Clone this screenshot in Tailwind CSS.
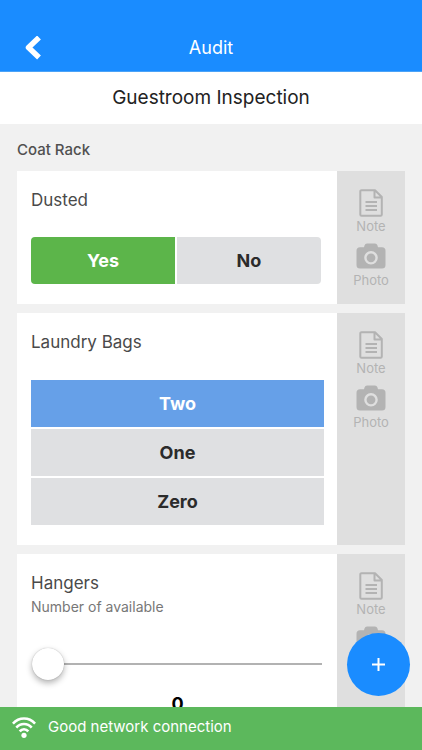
<!DOCTYPE html>
<html lang="en">
<head>
<meta charset="utf-8">
<meta name="viewport" content="width=device-width, initial-scale=1">
<title>Audit</title>
<script src="https://cdn.jsdelivr.net/npm/@tailwindcss/browser@4"></script>
</head>
<body class="relative flex h-dvh flex-col overflow-hidden bg-[#f1f1f1] font-['Inter',sans-serif] text-[#4a4a4a]">
<svg class="hidden" aria-hidden="true">
  <symbol id="note" viewBox="0 0 24 28">
    <path d="M2.500 1.200H16L22.800 8V25.500a1.200 1.200 0 0 1-1.200 1.200H2.500a1.200 1.200 0 0 1-1.200-1.200V2.400A1.200 1.200 0 0 1 2.500 1.200ZM15.500 1.500V8.500H22.500" fill="none" stroke="currentColor" stroke-width="2" stroke-linejoin="round"/>
    <path d="M6.500 13H18M6.500 17H18M6.500 21H18" fill="none" stroke="currentColor" stroke-width="1.900"/>
  </symbol>
  <symbol id="camera" viewBox="0 0 30 26">
    <path fill="currentColor" fill-rule="evenodd" d="M11 .5h8a2.500 2.500 0 0 1 2.400 1.800l.6 2H26a3.500 3.500 0 0 1 3.500 3.500V22a3.500 3.500 0 0 1-3.500 3.500H4A3.500 3.500 0 0 1 .5 22V7.800A3.500 3.500 0 0 1 4 4.300h4l.6-2A2.500 2.500 0 0 1 11 .5ZM15 8a6.800 6.800 0 1 0 0 13.600A6.800 6.800 0 0 0 15 8Zm0 2.400a4.400 4.400 0 1 1 0 8.800a4.400 4.400 0 0 1 0-8.800Z"/>
  </symbol>
</svg>

<header class="grid shrink-0 grid-cols-[1fr_auto_1fr] items-center border-b border-[#4ba3f7] bg-[#1a8cff] pt-6 text-white">
  <button type="button" aria-label="Back" class="ml-6 flex h-[47px] w-6 items-center">
    <svg class="h-6 w-[18px]" viewBox="0 0 18 24" fill="none" stroke="currentColor" stroke-width="5.500" stroke-linejoin="round" aria-hidden="true"><path d="M15 1.500 4.500 11.500 15 21.500"/></svg>
  </button>
  <h1 class="text-lg">Audit</h1>
</header>

<main class="min-h-0 flex-1 overflow-hidden">
  <h2 class="bg-white py-3 text-center text-[19px] leading-7 text-[#222]">Guestroom Inspection</h2>
  <section class="px-[17px] pt-3.5">
    <h3 class="text-[15px] leading-6 font-medium text-[#505050]">Coat Rack</h3>

    <div class="mt-[9px] flex flex-col gap-[9px]">
      <article class="flex bg-white">
        <div class="flex-1 pt-[17px] pr-[13px] pb-5 pl-3.5">
          <h4 class="text-[17px] leading-6">Dusted</h4>
          <div class="mt-[25px] mr-[3px] grid grid-cols-2 gap-0.5 text-lg font-bold" role="group" aria-label="Dusted">
            <button type="button" aria-pressed="true" class="h-[47px] rounded-l bg-[#5cb54a] text-white">Yes</button>
            <button type="button" aria-pressed="false" class="h-[47px] rounded-r bg-[#dfe0e2] text-[#2b2b2b]">No</button>
          </div>
        </div>
        <aside class="flex w-[68px] shrink-0 flex-col items-center gap-2 bg-[#dfdfdf] pt-[18px] text-[13px] leading-[18px] text-[#b3b3b3]">
          <button type="button" class="flex flex-col items-center"><svg class="h-7 w-6" aria-hidden="true"><use href="#note"/></svg>Note</button>
          <button type="button" class="flex flex-col items-center gap-0.5"><svg class="h-[26px] w-[30px]" aria-hidden="true"><use href="#camera"/></svg>Photo</button>
        </aside>
      </article>

      <article class="flex bg-white">
        <div class="flex-1 pt-[17px] pr-[13px] pb-5 pl-3.5">
          <h4 class="text-[17px] leading-6">Laundry Bags</h4>
          <div class="mt-[26px] flex flex-col gap-0.5 text-lg font-bold" role="group" aria-label="Laundry Bags">
            <button type="button" aria-pressed="true" class="h-[47px] bg-[#66a0e8] text-white">Two</button>
            <button type="button" aria-pressed="false" class="h-[47px] bg-[#dfe0e2] text-[#2b2b2b]">One</button>
            <button type="button" aria-pressed="false" class="h-[47px] bg-[#dfe0e2] text-[#2b2b2b]">Zero</button>
          </div>
        </div>
        <aside class="flex w-[68px] shrink-0 flex-col items-center gap-2 bg-[#dfdfdf] pt-[18px] text-[13px] leading-[18px] text-[#b3b3b3]">
          <button type="button" class="flex flex-col items-center"><svg class="h-7 w-6" aria-hidden="true"><use href="#note"/></svg>Note</button>
          <button type="button" class="flex flex-col items-center gap-0.5"><svg class="h-[26px] w-[30px]" aria-hidden="true"><use href="#camera"/></svg>Photo</button>
        </aside>
      </article>

      <article class="flex bg-white">
        <div class="flex-1 pt-[17px] pr-[13px] pb-5 pl-3.5">
          <h4 class="text-[17px] leading-6"><label for="hangers">Hangers</label></h4>
          <p class="text-sm leading-6 text-[#777]">Number of available</p>
          <div class="mt-[29px] mr-0.5 ml-px">
            <input id="hangers" type="range" min="0" max="20" value="0" class="block h-8 w-full appearance-none bg-transparent [&::-webkit-slider-runnable-track]:h-0.5 [&::-webkit-slider-runnable-track]:bg-[#b2b2b2] [&::-webkit-slider-thumb]:-mt-[15px] [&::-webkit-slider-thumb]:size-8 [&::-webkit-slider-thumb]:appearance-none [&::-webkit-slider-thumb]:rounded-full [&::-webkit-slider-thumb]:bg-white [&::-webkit-slider-thumb]:shadow-[0_0_1px_rgba(0,0,0,0.3),0_3px_6px_rgba(0,0,0,0.3)]">
          </div>
          <output for="hangers" class="mt-3 block text-center text-lg leading-6 font-bold text-black">0</output>
        </div>
        <aside class="flex w-[68px] shrink-0 flex-col items-center gap-2 bg-[#dfdfdf] pt-[18px] text-[13px] leading-[18px] text-[#b3b3b3]">
          <button type="button" class="flex flex-col items-center"><svg class="h-7 w-6" aria-hidden="true"><use href="#note"/></svg>Note</button>
          <button type="button" class="flex flex-col items-center gap-0.5"><svg class="h-[26px] w-[30px]" aria-hidden="true"><use href="#camera"/></svg>Photo</button>
        </aside>
      </article>
    </div>
  </section>
</main>

<button type="button" aria-label="Add" class="absolute right-3 bottom-[54px] flex size-[63px] items-center justify-center rounded-full bg-[#1a8cff] text-white">
  <svg class="size-3.5" viewBox="0 0 14 14" fill="none" stroke="currentColor" stroke-width="2" aria-hidden="true"><path d="M6.500 0V13M0 6.500H13"/></svg>
</button>

<footer class="flex h-[43px] shrink-0 items-center gap-3 bg-[#5cb85c] px-3 pb-0.5 text-[15px] text-white" role="status">
  <svg class="h-[22px] w-6 shrink-0" viewBox="0 0 24 22" fill="none" stroke="currentColor" stroke-width="2.600" aria-hidden="true">
    <path d="M.9 6.600C7-.2 17-.2 23.100 6.600M4.300 10.600C8.500 5.800 15.500 5.800 19.700 10.600M7.700 14.400C10 11.600 14 11.600 16.300 14.400"/>
    <circle cx="12" cy="18.300" r="2.600" fill="currentColor" stroke="none"/>
  </svg>
  <span>Good network connection</span>
</footer>
</body>
</html>
